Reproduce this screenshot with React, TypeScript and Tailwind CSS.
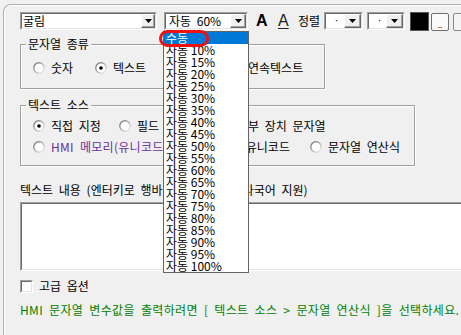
import React from 'react';

const Arrow: React.FC = () => (
  <svg width="7" height="4" viewBox="0 0 7 4">
    <path d="M0 0h7L3.5 4z" fill="#000" />
  </svg>
);

const DropBtn: React.FC<{ w?: string }> = ({ w = 'w-[14px]' }) => (
  <div className={`${w} h-full shrink-0 flex items-center justify-center bg-[#f0f0f0] border border-t-white border-l-white border-b-[#696969] border-r-[#696969] shadow-[inset_-1px_-1px_0_#a0a0a0]`}>
    <Arrow />
  </div>
);

const Combo: React.FC<{ w: string; text?: React.ReactNode; btn?: string }> = ({ w, text, btn }) => (
  <div className={`${w} shrink-0 h-[18px] border border-t-[#a0a0a0] border-l-[#a0a0a0] border-b-white border-r-white`}>
    <div className="h-full flex border border-t-[#696969] border-l-[#696969] border-b-[#e3e3e3] border-r-[#e3e3e3] bg-white">
      <div className="flex-1 flex items-center pl-[1px] overflow-hidden whitespace-nowrap">{text}</div>
      <DropBtn w={btn} />
    </div>
  </div>
);

const Radio: React.FC<{ checked?: boolean }> = ({ checked }) => (
  <svg width="12" height="12" viewBox="0 0 12 12" className="shrink-0">
    <defs>
      <linearGradient id="rg" x1="0" y1="0" x2="1" y2="1">
        <stop offset="0" stopColor="#6f6f6f" />
        <stop offset="0.55" stopColor="#b9b9b9" />
        <stop offset="1" stopColor="#f4f4f4" />
      </linearGradient>
    </defs>
    <circle cx="6" cy="6" r="5.2" fill="#fff" stroke="url(#rg)" strokeWidth="1.4" />
    {checked && <circle cx="6" cy="6" r="1.8" fill="#000" />}
  </svg>
);

const Opt: React.FC<{ checked?: boolean; label: string; className?: string; color?: string }> = ({ checked, label, className = '', color = '' }) => (
  <div className={`flex shrink-0 items-center gap-[6px] whitespace-nowrap ${className}`}>
    <Radio checked={checked} />
    <span className={color}>{label}</span>
  </div>
);

const Group: React.FC<{ title: string; className: string; children: React.ReactNode }> = ({ title, className, children }) => (
  <div className={`border border-[#a0a0a0] shadow-[inset_1px_1px_0_#fff,1px_1px_0_#fff] ${className}`}>
    <span className="block w-fit -mt-[8px] ml-[5px] px-[2px] bg-[#f0f0f0] leading-[14px]">{title}</span>
    {children}
  </div>
);

const sizes = ['수동', ...Array.from({ length: 19 }, (_, i) => `자동 ${10 + i * 5}%`)];

export default function App() {
  return (
    <div className="relative w-[461px] h-[335px] overflow-hidden bg-[#f0f0f0] text-black text-[12px] leading-[14px] [word-spacing:3px] font-['Noto_Sans_CJK_KR',sans-serif]">
      <div className="ml-[3px] mt-[4px] h-[331px] border-l border-t border-[#b0b0b0] rounded-tl-[8px] shadow-[inset_1px_1px_0_#fff] pl-[16px] pt-[7px]">
        {/* toolbar */}
        <div className="flex items-center h-[18px] whitespace-nowrap">
          <Combo w="w-[137px]" text="굴림" />
          <Combo w="w-[84px] ml-[7px]" text={<span className="pl-[2px]">자동 60%</span>} btn="w-[16px]" />
          <span className="ml-[8px] w-[12px] shrink-0 text-[16px] font-bold font-['Liberation_Sans',sans-serif] leading-[18px]">A</span>
          <span className="ml-[10px] w-[12px] shrink-0 text-[16px] font-['Liberation_Sans',sans-serif] leading-[18px] underline underline-offset-[2px] font-light text-[#222]">A</span>
          <span className="ml-[8px] w-[24px] shrink-0">정렬</span>
          <Combo w="w-[39px] ml-[2px]" text={<span className="pl-[7px] text-[9px]">·</span>} btn="w-[17px]" />
          <Combo w="w-[38px] ml-[4px]" text={<span className="pl-[7px] text-[9px]">·</span>} btn="w-[17px]" />
          <div className="ml-[5px] w-[19px] h-[19px] shrink-0 bg-black border border-[#555]" />
          <div className="ml-[2px] w-[18px] h-[18px] shrink-0 mt-[1px] rounded-[2px] border border-[#707070] bg-[#fafafa] flex items-end justify-center pb-[1px] text-[8px] leading-[8px]">..</div>
          <div className="ml-[4px] w-[20px] h-[18px] shrink-0 mt-[1px] rounded-[2px] border border-[#8a8a8a] bg-[#f4f4f4]" />
        </div>

        {/* 문자열 종류 */}
        <Group title="문자열 종류" className="mt-[14px] w-[305px]">
          <div className="flex items-center h-[14px] mt-[10px] mb-[13px] pl-[12px]">
            <Opt label="숫자" className="w-[62px]" />
            <Opt checked label="텍스트" className="w-[68px]" />
            <Opt label="날짜" className="w-[67px]" />
            <Opt label="연속텍스트" />
          </div>
        </Group>

        {/* 텍스트 소스 */}
        <Group title="텍스트 소스" className="mt-[16px] w-[395px]">
          <div className="flex items-center h-[14px] mt-[7px] pl-[12px]">
            <Opt checked label="직접 지정" className="w-[86px]" />
            <Opt label="필드 값" className="w-[100px]" />
            <Opt label="외부 장치 문자열" />
          </div>
          <div className="flex items-center h-[14px] mt-[7px] mb-[11px] pl-[12px]">
            <Opt label="HMI 메모리(유니코드)" color="text-[#6b2f9c] tracking-[0.3px]" className="w-[167px]" />
            <Opt label="외부 유니코드" className="w-[110px]" />
            <Opt label="문자열 연산식" />
          </div>
        </Group>

        <div className="mt-[17px] whitespace-nowrap">텍스트 내용 (엔터키로 행바꿈, 100000자, 다국어 지원)</div>
        <div className="mt-[5px] w-[450px] h-[69px] border border-t-[#a0a0a0] border-l-[#a0a0a0] border-b-white border-r-white">
          <div className="h-full border border-t-[#696969] border-l-[#696969] border-b-[#e3e3e3] border-r-[#e3e3e3] bg-white" />
        </div>

        <div className="flex items-center h-[14px] mt-[8px] gap-[6px]">
          <div className="w-[13px] h-[13px] border border-t-[#a0a0a0] border-l-[#a0a0a0] border-b-white border-r-white">
            <div className="h-full border border-t-[#696969] border-l-[#696969] border-b-[#e3e3e3] border-r-[#e3e3e3] bg-white" />
          </div>
          <span>고급 옵션</span>
        </div>

        <div className="mt-[10px] whitespace-nowrap text-[#008000] tracking-[0.35px]">
          HMI 문자열 변수값을 출력하려면 [ 텍스트 소스 &gt; 문자열 연산식 ]을 선택하세요.
        </div>
      </div>

      {/* open size list */}
      <div className="absolute left-[163px] top-[31px] w-[86px] border border-[#646464] bg-white [word-spacing:0px]">
        {sizes.map((s, i) => (
          <div key={s} className={`h-[12px] leading-[12px] pl-[2px] whitespace-nowrap ${i === 0 ? 'bg-[#0078d7] text-white' : ''}`}>
            {s}
          </div>
        ))}
      </div>
      <div className="absolute left-[159px] top-[30px] w-[50px] h-[17px] border-[3px] border-[#f01010] rounded-[9px]" />
    </div>
  );
}
